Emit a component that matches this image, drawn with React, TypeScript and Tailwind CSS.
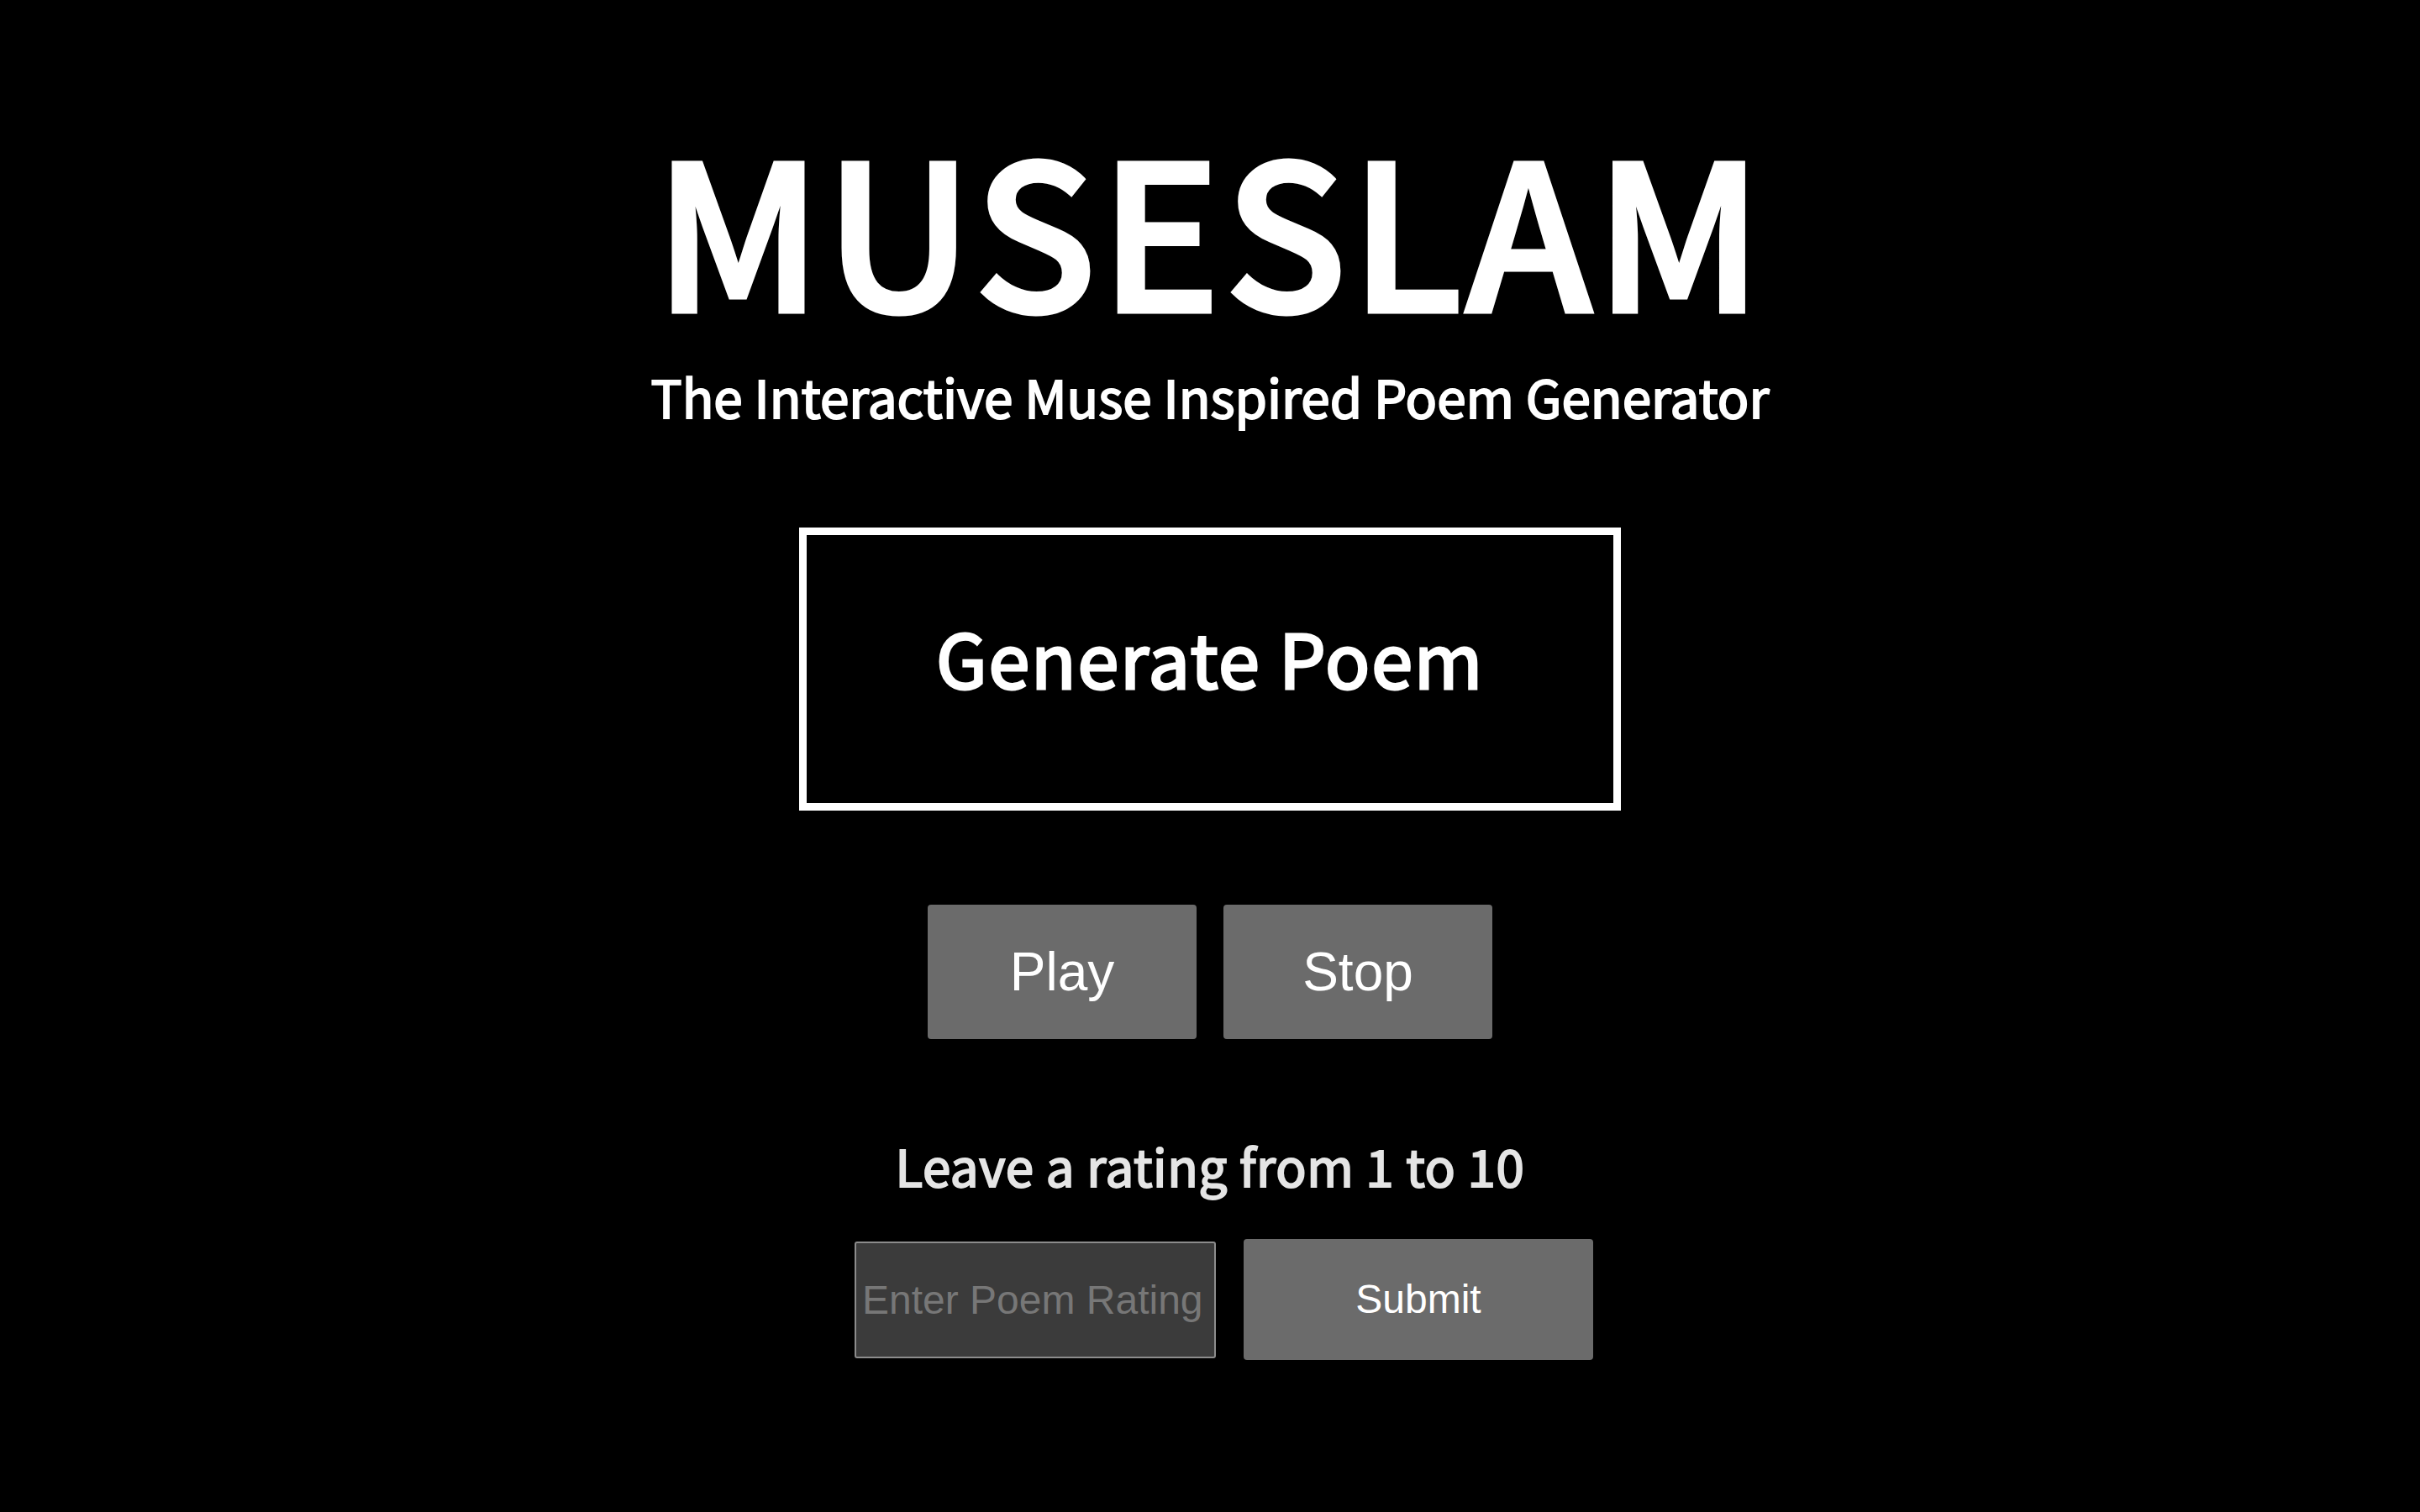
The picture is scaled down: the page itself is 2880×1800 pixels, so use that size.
import React from "react";

const cjk = { fontFamily: '"Noto Sans CJK KR", "Noto Sans", sans-serif' };
const arial = { fontFamily: '"Liberation Sans", Arial, sans-serif' };

export default function App() {
  return (
    <div className="min-h-[1800px] w-full bg-black flex flex-col items-center">
      <h1
        style={cjk}
        className="mt-[147px] text-[240px] leading-none font-medium text-white tracking-[4px] [-webkit-text-stroke:5px_white]"
      >
        MUSESLAM
      </h1>
      <p
        style={cjk}
        className="mt-[53px] text-[62px] leading-none font-normal text-white tracking-[0px] [-webkit-text-stroke:2px_white]"
      >
        The Interactive Muse Inspired Poem Generator
      </p>
      <button
        style={cjk}
        className="mt-[126px] w-[978px] h-[337px] border-[9px] border-white bg-black text-white text-[88px] leading-none font-normal tracking-[1.75px] [-webkit-text-stroke:3px_white] flex items-center justify-center pb-[30px]"
      >
        Generate Poem
      </button>
      <div className="mt-[112px] flex gap-[32px]">
        <button
          style={arial}
          className="w-[320px] h-[160px] rounded-[4px] bg-[#6b6b6b] text-white text-[64px] leading-none flex items-center justify-center"
        >
          Play
        </button>
        <button
          style={arial}
          className="w-[320px] h-[160px] rounded-[4px] bg-[#6b6b6b] text-white text-[64px] leading-none flex items-center justify-center"
        >
          Stop
        </button>
      </div>
      <p
        style={cjk}
        className="mt-[120px] text-[60px] leading-none font-normal text-[#e5e5e5] tracking-[0.6px] [-webkit-text-stroke:2px_#e5e5e5]"
      >
        Leave a rating from 1 to 10
      </p>
      <div className="mt-[58px] ml-[33px] flex items-center gap-[33px]">
        <input
          style={arial}
          placeholder="Enter Poem Rating"
          className="w-[430px] h-[139px] rounded-[3px] border-2 border-[#8c8c8c] bg-[#3b3b3b] px-[7px] text-[48px] text-white placeholder:text-[#777777] outline-none"
        />
        <button
          style={arial}
          className="w-[416px] h-[144px] rounded-[4px] bg-[#6b6b6b] text-white text-[48px] leading-none flex items-center justify-center"
        >
          Submit
        </button>
      </div>
    </div>
  );
}
